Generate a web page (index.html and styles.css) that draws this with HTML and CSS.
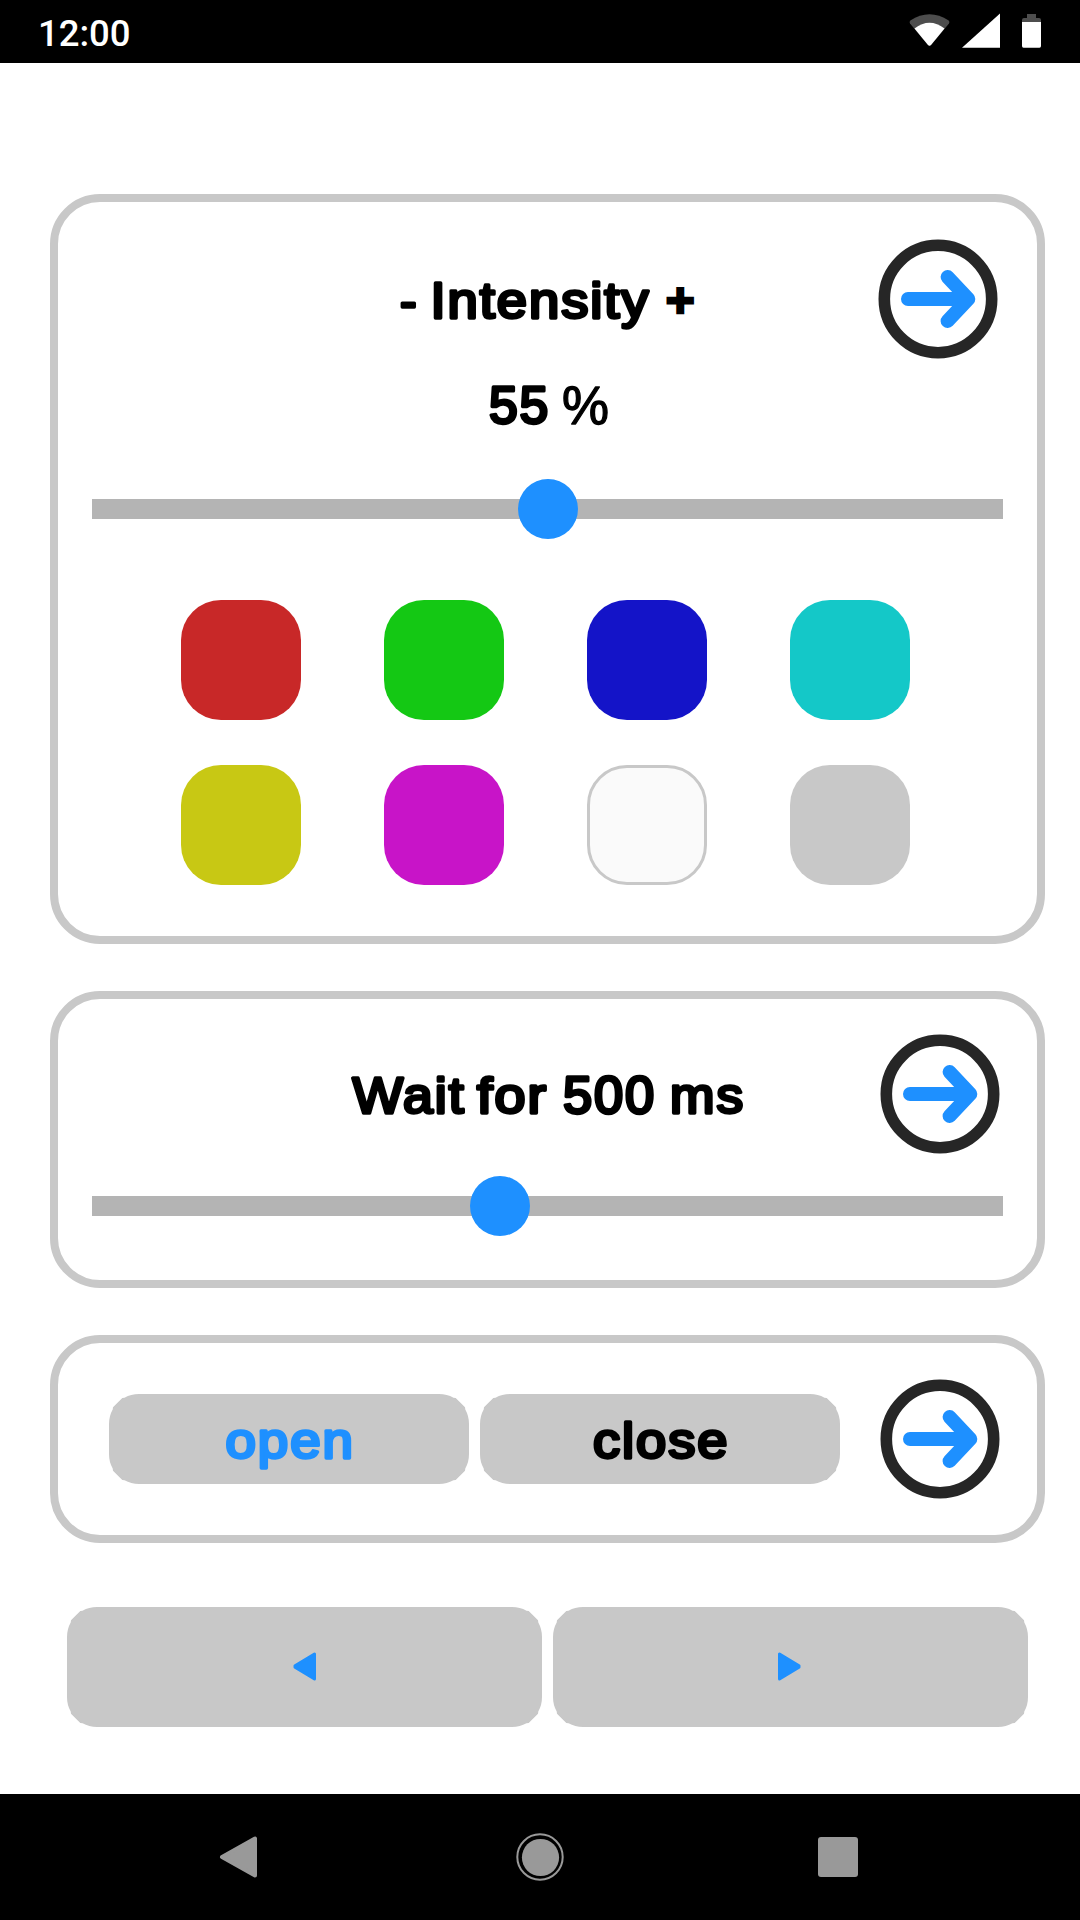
FILE: index.html
```html
<!DOCTYPE html>
<html lang="en">
<head>
<meta charset="utf-8">
<title>Light control</title>
<link rel="stylesheet" href="styles.css">
</head>
<body>
<svg class="defs" aria-hidden="true">
  <symbol id="go" viewBox="-60 -60 120 120">
    <circle r="53.7" fill="#fff" stroke="#262626" stroke-width="11.6"/>
    <path d="M-30 0H29M9.6 -22L30.3 0L9.6 22" fill="none" stroke="#1e90ff" stroke-width="14" stroke-linecap="round" stroke-linejoin="round"/>
  </symbol>
</svg>
<header class="status">
  <span class="clock">12:00</span>
  <svg class="status-icons" viewBox="900 0 160 63">
    <path d="M910.3 20.5Q929.5 8 948.7 20.5Q950 22 949 23.5L931 45Q929.500 46.500 928 45L910 23.500Q909 22 910.300 20.500Z" fill="#4d4d4d"/>
    <path d="M914.500 28.500Q929.500 17 944.500 28.500L931 45Q929.500 46.500 928 45Z" fill="#fff"/>
    <path d="M962 47.700L1000 13.500V47.700Z" fill="#fff"/>
    <path d="M1022 22V20Q1022 18 1024 18H1027V14H1036V18H1039Q1041 18 1041 20V22Z" fill="#4d4d4d"/>
    <path d="M1022 22H1041V46Q1041 47.700 1039.500 47.700H1023.500Q1022 47.700 1022 46Z" fill="#fff"/>
  </svg>
</header>

<main class="content">
  <section class="card card-light">
    <div class="card-head">
      <svg class="label" width="786" height="120" viewBox="92 239 786 120">
        <text class="round single" x="400" y="317.700" textLength="16.600" lengthAdjust="spacingAndGlyphs">-</text>
        <text class="round" x="430.500" y="317.700" textLength="220" lengthAdjust="spacingAndGlyphs">Intensity</text>
        <text class="round single plus" x="666.500" y="315.500" textLength="27.500" lengthAdjust="spacingAndGlyphs">+</text>
      </svg>
      <svg class="go"><use href="#go"/></svg>
    </div>
    <svg class="label" width="911" height="80" viewBox="92 359 911 80">
      <text class="round digits" x="489" y="422.700" textLength="61" lengthAdjust="spacingAndGlyphs">55</text>
      <text class="round single thin" x="562" y="423.500" textLength="47" lengthAdjust="spacingAndGlyphs">%</text>
    </svg>
    <div class="slider"><span class="thumb" style="left:426px"></span></div>
    <div class="swatches">
      <span class="swatch red"></span><span class="swatch green"></span><span class="swatch blue"></span><span class="swatch cyan"></span>
      <span class="swatch yellow"></span><span class="swatch magenta"></span><span class="swatch white"></span><span class="swatch gray"></span>
    </div>
  </section>

  <section class="card card-wait">
    <div class="card-head">
      <svg class="label" width="788" height="120" viewBox="92 1034 788 120">
        <text class="round" x="352.500" y="1112.700" textLength="113" lengthAdjust="spacingAndGlyphs">Wait</text>
        <text class="round" x="477" y="1112.700" textLength="71" lengthAdjust="spacingAndGlyphs">for</text>
        <text class="round digits" x="563" y="1112.700" textLength="93" lengthAdjust="spacingAndGlyphs">500</text>
        <text class="round" x="670" y="1112.700" textLength="75" lengthAdjust="spacingAndGlyphs">ms</text>
      </svg>
      <svg class="go"><use href="#go"/></svg>
    </div>
    <div class="slider"><span class="thumb" style="left:378px"></span></div>
  </section>

  <section class="card card-gate">
    <div class="pill">
      <svg class="label" width="360" height="90" viewBox="109 1394 360 90">
        <text class="round blue-text" x="225.500" y="1457.700" textLength="129.500" lengthAdjust="spacingAndGlyphs">open</text>
      </svg>
    </div>
    <div class="pill">
      <svg class="label" width="360" height="90" viewBox="480 1394 360 90">
        <text class="round" x="593" y="1457.700" textLength="136.500" lengthAdjust="spacingAndGlyphs">close</text>
      </svg>
    </div>
    <svg class="go"><use href="#go"/></svg>
  </section>

  <div class="pager">
    <div class="page-btn"><svg width="24" height="30" viewBox="0 0 24 30"><path d="M21.500 2V27L2 15.300V13.700Z"/></svg></div>
    <div class="page-btn next"><svg width="24" height="30" viewBox="0 0 24 30"><path d="M2.500 2V27L22 15.300V13.700Z"/></svg></div>
  </div>
</main>

<footer class="nav">
  <svg width="1080" height="126" viewBox="0 1794 1080 126" fill="#999">
    <path d="M222 1857L255 1838.500V1875.500Z" stroke="#999" stroke-width="4" stroke-linejoin="round"/>
    <circle cx="540" cy="1857" r="22.700" fill="none" stroke="#999" stroke-width="2"/>
    <circle cx="540.500" cy="1857.500" r="18.600"/>
    <rect x="818" y="1837" width="40" height="40" rx="3"/>
  </svg>
</footer>
</body>
</html>
```
FILE: styles.css
```css
* { box-sizing: border-box; }
body {
  margin: 0;
  width: 1080px;
  height: 1920px;
  display: flex;
  flex-direction: column;
  background: #fff;
  font-family: "Liberation Sans", Arial, sans-serif;
  overflow: hidden;
}
svg { display: block; flex: none; }
.defs { display: none; }

.status {
  height: 63px;
  background: #000;
  color: #fff;
  display: flex;
  justify-content: space-between;
  padding: 0 20px 0 38px;
}
.clock { font: 500 36.500px/67px Roboto, sans-serif; }
.status-icons { width: 160px; height: 63px; }

.content {
  flex: 1;
  padding: 131px 35px 0 50px;
}
.card {
  border: 8px solid #c8c8c8;
  border-radius: 50px;
}
.card-light { height: 750px; padding: 37px 34px 0; }
.card-wait { height: 297px; padding: 35px 34px 0; margin-top: 47px; }
.card-gate {
  height: 208px;
  margin-top: 47px;
  padding-left: 51px;
  display: flex;
  align-items: center;
  gap: 11px;
}
.card-head { display: flex; }
.go { width: 120px; height: 120px; }
.card-gate .go { margin-left: 29px; }

.round {
  font-size: 50px;
  letter-spacing: 1.800px;
  fill: #000;
  stroke: #000;
  stroke-width: 3.300px;
  stroke-linejoin: round;
}
.digits { font-size: 51px; }
.single { letter-spacing: 0; }
.thin { stroke-width: 1.300px; font-size: 54px; }
.plus { stroke-width: 4.500px; stroke-linejoin: miter; font-size: 46px; }
.blue-text { fill: #1e90ff; stroke: #1e90ff; }

.slider {
  position: relative;
  height: 60px;
  margin-top: 40px;
  background: linear-gradient(#b4b4b4, #b4b4b4) center / 100% 20px no-repeat;
}
.card-wait .slider { margin-top: 22px; }
.thumb {
  position: absolute;
  top: 0;
  width: 60px;
  height: 60px;
  border-radius: 50%;
  background: #1e90ff;
}

.swatches {
  display: grid;
  grid-template-columns: repeat(4, 120px);
  grid-auto-rows: 120px;
  gap: 45px 83px;
  margin: 61px 0 0 89px;
}
.swatch { border-radius: 40px; }
.red { background: #c82828; }
.green { background: #14c814; }
.blue { background: #1414c8; }
.cyan { background: #14c8c8; }
.yellow { background: #c8c814; }
.magenta { background: #c814c8; }
.white { background: #fafafa; border: 3px solid #c8c8c8; }
.gray { background: #c8c8c8; }

.pill {
  width: 360px;
  height: 90px;
  background: #c8c8c8;
  clip-path: path("M30 0Q22 0 15.500 3.700L13.300 4L4 13.300L3.700 15.500Q0 22 0 30V60Q0 68 3.700 74.500L4 76.700L13.300 86L15.500 86.300Q22 90 30 90H330Q338 90 344.500 86.300L346.700 86L356 76.700L356.300 74.500Q360 68 360 60V30Q360 22 356.300 15.500L356 13.300L346.700 4L344.500 3.700Q338 0 330 0Z");
}

.pager { display: flex; gap: 11px; margin: 64px 0 0 17px; }
.page-btn {
  width: 475px;
  height: 120px;
  background: #c8c8c8;
  display: flex;
  align-items: center;
  padding-left: 226px;
  clip-path: path("M30 0Q22 0 15.500 3.700L13.300 4L4 13.300L3.700 15.500Q0 22 0 30V90Q0 98 3.700 104.500L4 106.700L13.300 116L15.500 116.300Q22 120 30 120H445Q453 120 459.500 116.300L461.700 116L471 106.700L471.300 104.500Q475 98 475 90V30Q475 22 471.300 15.500L471 13.300L461.700 4L459.500 3.700Q453 0 445 0Z");
}
.page-btn.next { padding-left: 224px; }
.page-btn svg { fill: #1e90ff; stroke: #1e90ff; stroke-width: 3px; stroke-linejoin: round; }

.nav { height: 126px; background: #000; }
```
